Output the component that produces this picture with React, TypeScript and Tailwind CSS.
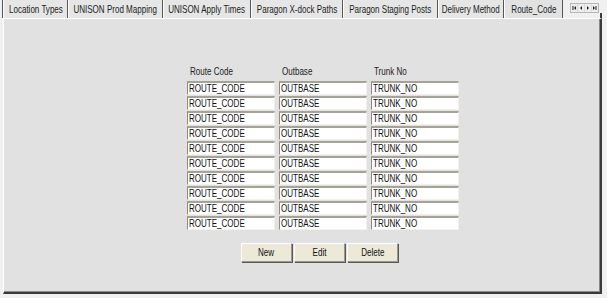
import type { ReactNode } from 'react';

const tabs = [
  { label: 'Location Types', w: 'w-[65px]' },
  { label: 'UNISON Prod Mapping', w: 'w-[95px]' },
  { label: 'UNISON Apply Times', w: 'w-[88px]' },
  { label: 'Paragon X-dock Paths', w: 'w-[92px]' },
  { label: 'Paragon Staging Posts', w: 'w-[95px]' },
  { label: 'Delivery Method', w: 'w-[66px]' },
  { label: 'Route_Code', w: 'w-[59px]', active: true },
];

const rows = Array.from({ length: 10 });

// the source capture is squeezed horizontally, so text is narrowed to match
const Txt = ({ children, center }: { children: ReactNode; center?: boolean }) => (
  <span
    className={`inline-block whitespace-nowrap scale-x-[0.73] ${center ? 'origin-center' : 'origin-left'}`}
  >
    {children}
  </span>
);

const Cell = ({ value }: { value: string }) => (
  <div className="w-[88px] h-[14px] bg-white border-t-2 border-l border-t-[#a5a297] border-l-[#8e8b80] border-r border-b border-r-[#f2f1ea] border-b-[#f2f1ea] pl-[1px] flex items-center leading-none text-[11px] text-[#111]">
    <Txt>{value}</Txt>
  </div>
);

const Btn = ({ label }: { label: string }) => (
  <button className="w-[51px] h-[19px] bg-[#ece9d8] border border-t-white border-l-white border-r-[#9a988c] border-b-[#9a988c] shadow-[1px_1px_0_#5a5a5a] flex items-center justify-center text-[11px] leading-none text-[#111]">
    <Txt center>{label}</Txt>
  </button>
);

const NavArrows = () => (
  <div className="flex-1 flex">
    <div className="ml-[7px] mt-[3px] w-[29px] h-[10px] bg-[#eeeeee] border border-[#b8b8b8] flex">
      <svg width="27" height="8" viewBox="0 0 27 8">
        <rect x="6.5" y="0" width="0.6" height="8" fill="#c8c8c8" />
        <rect x="13.5" y="0" width="0.6" height="8" fill="#c8c8c8" />
        <rect x="20.5" y="0" width="0.6" height="8" fill="#c8c8c8" />
        <rect x="1.5" y="2" width="1" height="4" fill="#222" />
        <polygon points="5,2 5,6 3,4" fill="#222" />
        <polygon points="11,2 11,6 9,4" fill="#222" />
        <polygon points="16,2 16,6 18,4" fill="#222" />
        <polygon points="22,2 22,6 24,4" fill="#222" />
        <rect x="24.5" y="2" width="1" height="4" fill="#222" />
      </svg>
    </div>
    <div className="ml-[1px] mt-[13px] w-[2px] h-[5px] bg-[#3a3a3a]" />
  </div>
);

export default function App() {
  return (
    <div className="w-[607px] h-[298px] bg-[#f0f0f0] font-['Liberation_Sans',Arial,sans-serif] text-[#1a1a1a] overflow-hidden">
      {/* tab strip */}
      <div className="flex h-[18px] pl-[2px]">
        <div className="w-[1px] h-full bg-[#555]" />
        {tabs.map((t) => (
          <div
            key={t.label}
            className={`${t.w} h-full flex items-center justify-center border-l border-l-white border-r border-r-[#555] text-[11px] leading-none text-[#222] ${
              t.active ? 'bg-[#e2e2e2]' : 'bg-[#e6e6e6]'
            }`}
          >
            <Txt center>{t.label}</Txt>
          </div>
        ))}
        <NavArrows />
      </div>

      {/* panel */}
      <div className="ml-[3px] w-[599px] h-[276px] bg-[#e1e1e1] border-l border-t border-l-white border-t-white border-r-2 border-b-2 border-r-[#3a3a3a] border-b-[#3a3a3a] shadow-[inset_-1px_-1px_0_#8a8a8a]">
        <div className="ml-[183px] mt-[47px] w-[273px]">
          <div className="grid grid-cols-[88px_88px_88px] gap-x-[4px] h-[15px] text-[11px] leading-none text-[#222]">
            <div className="pl-[3px]">
              <Txt>Route Code</Txt>
            </div>
            <div className="pl-[3px]">
              <Txt>Outbase</Txt>
            </div>
            <div className="pl-[3px]">
              <Txt>Trunk No</Txt>
            </div>
          </div>
          <div className="flex flex-col gap-[1px]">
            {rows.map((_, i) => (
              <div key={i} className="grid grid-cols-[88px_88px_88px] gap-x-[4px]">
                <Cell value="ROUTE_CODE" />
                <Cell value="OUTBASE" />
                <Cell value="TRUNK_NO" />
              </div>
            ))}
          </div>
        </div>
        <div className="ml-[237px] mt-[13px] flex gap-[2px]">
          <Btn label="New" />
          <Btn label="Edit" />
          <Btn label="Delete" />
        </div>
      </div>
    </div>
  );
}
